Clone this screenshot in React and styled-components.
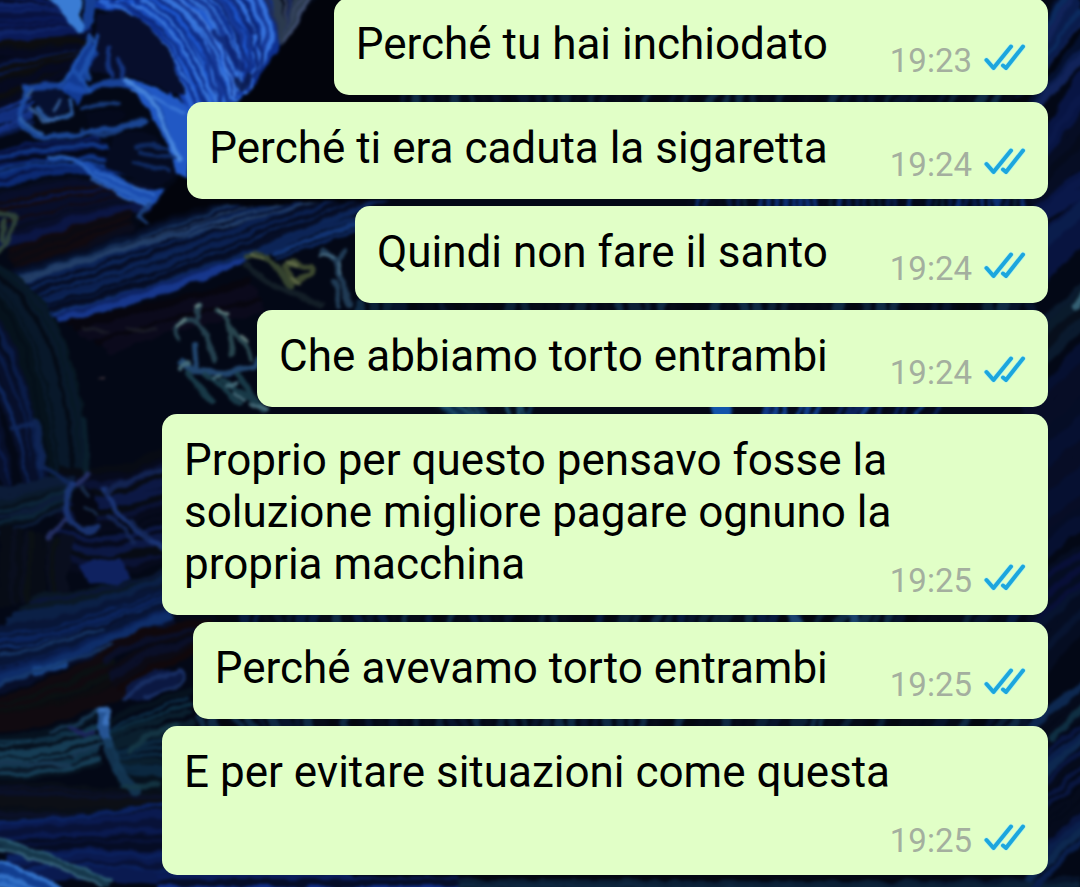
import React from "react";
import styled, { createGlobalStyle } from "styled-components";

const GlobalStyle = createGlobalStyle`
  *, *::before, *::after { box-sizing: border-box; }
  body {
    margin: 0;
    background: #030816;
    font-family: Roboto, "Noto Sans", sans-serif;
  }
`;

const Screen = styled.main`
  position: relative;
  height: 100vh;
  overflow: hidden;
  background: #030816;
`;

const Wallpaper = styled.svg`
  position: absolute;
  inset: 0;
  width: 100%;
  height: 100%;
`;

const MessageList = styled.ol`
  position: relative;
  display: flex;
  flex-direction: column;
  align-items: flex-end;
  justify-content: flex-end;
  gap: 7px;
  height: 100%;
  margin: 0;
  padding: 0 32px 12px;
  list-style: none;
`;

const Bubble = styled.li`
  display: flow-root;
  flex: none;
  max-width: calc(100% - 130px);
  padding: 20px 22px 16px;
  border-radius: 15px;
  background: #e1ffc7;
  color: #000;
  font-size: 44px;
  line-height: 52px;
`;

const Meta = styled.span`
  float: right;
  display: flex;
  align-items: flex-end;
  gap: 11px;
  height: 61px;
  margin-left: 62px;
  color: #a4af9f;
  font-size: 33px;
  line-height: 36px;
`;

const Ticks = styled.svg`
  display: block;
  width: 43px;
  height: 36px;
  fill: none;
  stroke-linecap: round;
  stroke-linejoin: round;
`;

const TICK_PATH = "M3.5 17 L10.5 25 L28 3.5 M20 22.5 L23 25 L40 3.5";

function ReadTicks() {
  return (
    <Ticks viewBox="0 0 43 36" role="img" aria-label="Letto">
      <path d={TICK_PATH} stroke="#b5f3e8" strokeWidth="5.4" />
      <path d={TICK_PATH} stroke="#1ca6dd" strokeWidth="4" />
    </Ticks>
  );
}

const MESSAGES = [
  { text: "Perché tu hai inchiodato", time: "19:23" },
  { text: "Perché ti era caduta la sigaretta", time: "19:24" },
  { text: "Quindi non fare il santo", time: "19:24" },
  { text: "Che abbiamo torto entrambi", time: "19:24" },
  {
    text: "Proprio per questo pensavo fosse la soluzione migliore pagare ognuno la propria macchina",
    time: "19:25",
  },
  { text: "Perché avevamo torto entrambi", time: "19:25" },
  { text: "E per evitare situazioni come questa", time: "19:25" },
];

const NAVY = ["#04102f", "#0a1c4c", "#040a1c", "#11235a", "#020612", "#0b2a5e"];
const BLUE = ["#1540ac", "#1d56cc", "#0e3090", "#2a64d2", "#163896", "#3673dc"];
const DIM = ["#07142c", "#0b2036", "#050b18", "#0f2a44", "#03070f"];
const TEAL = ["#0a2038", "#103349", "#06121f", "#163d55", "#0a1828"];

// Each bundle blends brush strokes between two cubic curves.
const BUNDLES = [
  // left edge, top
  { a: [-10, -6, 20, -6, 40, 0, 60, 4], b: [-10, 50, 30, 48, 60, 40, 90, 34], n: 16, w: 5, c: ["#0a1a58", "#081240", "#0f2468", "#050a24"] },
  { a: [-10, 48, 30, 44, 60, 40, 84, 42], b: [-10, 108, 20, 102, 50, 80, 70, 70], n: 14, w: 5, c: ["#0a1a4a", "#080c18", "#0c0d10", "#060a20"] },
  { a: [-10, 112, 10, 106, 20, 102, 30, 98], b: [-10, 140, 10, 132, 20, 130, 32, 124], n: 7, w: 4, c: ["#123080", "#0a1b4c", "#163488"] },
  { a: [-10, 152, 30, 140, 60, 142, 100, 140], b: [-10, 186, 30, 174, 80, 166, 130, 176], n: 14, w: 4, c: ["#0c2a74", "#07103a", "#113684", "#0a1c58", "#040818"] },
  { a: [-10, 194, 30, 184, 70, 174, 150, 186], b: [-10, 250, 50, 236, 90, 216, 150, 206], n: 16, w: 5, c: ["#070d20", "#0b1644", "#05060c", "#120b12", "#080e2a"] },
  { a: [10, 250, 50, 236, 80, 224, 130, 212], b: [20, 274, 60, 256, 100, 240, 130, 228], n: 6, w: 5, c: ["#0b0a12", "#0a0c1c", "#110a10"] },
  // bright sweep at the top
  { a: [88, -2, 150, -8, 170, 60, 186, 178], b: [268, -20, 286, 20, 286, 50, 234, 100], n: 2, w: 2, c: ["#1747b6"] },
  { a: [90, 4, 148, 6, 168, 70, 196, 126], b: [262, -10, 274, 20, 288, 40, 254, 84], n: 34, w: 7, c: BLUE },
  { a: [110, 6, 170, 20, 184, 90, 206, 114], b: [240, -10, 250, 20, 272, 50, 258, 74], n: 14, w: 2, c: ["#4a86e6", "#0d2c84", "#3a78dc", "#0c2470"] },
  { a: [264, -10, 272, 10, 278, 24, 282, 44], b: [316, -10, 312, 0, 300, 14, 284, 40], n: 9, w: 4, c: ["#35415e", "#1d2c5c", "#2b3a4e", "#3c4a6a"] },
  // diagonals below the canvas edge
  { a: [10, 276, 90, 252, 180, 218, 262, 196], b: [54, 314, 150, 292, 250, 252, 390, 196], n: 24, w: 6, c: ["#071532", "#0b2050", "#050c22", "#0c2558", "#060e26"] },
  { a: [20, 276, 100, 250, 180, 226, 240, 200], b: [24, 280, 130, 244, 200, 232, 330, 196], n: 4, w: 2, c: ["#24406a", "#163058"] },
  { a: [54, 314, 120, 300, 180, 278, 244, 258], b: [64, 320, 130, 306, 190, 284, 240, 264], n: 4, w: 4, c: ["#17378c", "#0e2464", "#1e489c"] },
  { a: [268, 250, 300, 238, 330, 222, 400, 210], b: [280, 256, 310, 246, 350, 230, 400, 216], n: 3, w: 4, c: ["#123474", "#0c2456"] },
  { a: [70, 324, 120, 314, 180, 300, 250, 280], b: [110, 350, 150, 330, 200, 322, 260, 310], n: 8, w: 6, c: ["#060818", "#0b0a1c", "#07060f"] },
  // arcs at the left edge
  { a: [-10, 264, 40, 280, 84, 350, 84, 470], b: [-10, 300, 22, 330, 34, 420, 40, 480], n: 16, w: 6, c: ["#05121c", "#071822", "#040b16", "#08182a"] },
  { a: [-4, 320, 18, 350, 34, 420, 42, 480], b: [-10, 380, 8, 410, 18, 440, 24, 484], n: 8, w: 5, c: ["#0a1c48", "#0e265c", "#070f2a"] },
  { a: [-10, 400, 0, 420, 6, 450, 10, 480], b: [-10, 440, -4, 450, 0, 470, 4, 484], n: 4, w: 6, c: ["#0a1a48", "#070f2a"] },
  // lower left waves
  { a: [60, 470, 90, 480, 130, 470, 170, 450], b: [60, 560, 90, 580, 130, 570, 170, 560], n: 16, w: 7, c: ["#060a1c", "#0a1234", "#070b14", "#0c1844"] },
  { a: [-10, 490, 20, 484, 50, 480, 74, 478], b: [-10, 534, 20, 530, 40, 520, 66, 504], n: 10, w: 5, c: ["#0a1a2c", "#0c2438", "#07121e", "#0c1c38"] },
  { a: [4, 530, 2, 550, 4, 580, 0, 604], b: [70, 540, 64, 560, 62, 580, 66, 596], n: 12, w: 7, c: ["#070c16", "#090e1e", "#0a1014"] },
  { a: [36, 598, 80, 590, 120, 592, 170, 570], b: [-10, 634, 50, 632, 110, 610, 170, 584], n: 10, w: 5, c: ["#0a1826", "#0b2046", "#0a1638"] },
  { a: [-10, 626, 60, 632, 110, 606, 170, 588], b: [-10, 694, 50, 676, 90, 652, 170, 622], n: 20, w: 5, c: ["#0b2258", "#081638", "#0f2e6a", "#070f2a", "#0c2660"] },
  { a: [0, 700, 50, 684, 80, 668, 110, 650], b: [-10, 726, 40, 724, 80, 712, 120, 696], n: 9, w: 7, c: ["#0c0c10", "#0a1012", "#100a10"] },
  { a: [100, 652, 130, 632, 160, 624, 210, 622], b: [120, 690, 150, 664, 170, 662, 210, 646], n: 8, w: 6, c: ["#0b0a14", "#0a0f28", "#10080c"] },
  { a: [-10, 736, 30, 736, 60, 730, 96, 716], b: [-10, 776, 30, 780, 70, 774, 100, 764], n: 14, w: 4, c: TEAL },
  { a: [108, 726, 130, 708, 160, 704, 190, 690], b: [122, 784, 140, 796, 160, 790, 190, 800], n: 15, w: 5, c: ["#0a1f2e", "#0b2840", "#06121e", "#0c2c40"] },
  { a: [-10, 784, 40, 780, 90, 790, 170, 794], b: [-10, 822, 50, 820, 100, 828, 170, 812], n: 10, w: 6, c: ["#080e18", "#0a1028", "#0c0f16"] },
  { a: [-10, 824, 60, 824, 110, 810, 180, 806], b: [20, 884, 90, 864, 130, 890, 380, 890], n: 20, w: 6, c: ["#0a1a50", "#081238", "#0b2260", "#050c24"] },
  { a: [-10, 838, 30, 846, 70, 866, 110, 880], b: [-10, 850, 20, 850, 60, 868, 100, 886], n: 5, w: 3, c: ["#2b5a72", "#16384c", "#356078"] },
  { a: [-10, 862, 10, 866, 40, 876, 60, 892], b: [-10, 884, 10, 884, 20, 888, 34, 898], n: 6, w: 5, c: ["#1d58b4", "#3270c6", "#123e90"] },
  { a: [160, 878, 240, 874, 320, 882, 470, 878], b: [160, 892, 240, 888, 320, 894, 470, 890], n: 6, w: 4, c: ["#0a1c5a", "#12308a", "#060e28"] },
  { a: [460, 878, 640, 874, 840, 884, 1080, 876], b: [460, 890, 640, 890, 840, 894, 1080, 890], n: 6, w: 4, c: DIM },
  // right edge
  { a: [1020, 60, 1046, 30, 1060, 0, 1070, -20], b: [1020, 124, 1050, 96, 1070, 70, 1090, 50], n: 12, w: 7, c: NAVY },
  { a: [1020, 178, 1046, 140, 1070, 90, 1090, 66], b: [1020, 230, 1050, 214, 1070, 200, 1090, 190], n: 12, w: 8, c: ["#081544", "#050b1c", "#0a184a", "#060d24"] },
  { a: [1020, 250, 1050, 230, 1070, 212, 1090, 194], b: [1030, 290, 1050, 274, 1070, 250, 1090, 236], n: 7, w: 7, c: ["#0a1d4c", "#081440"] },
  { a: [1030, 330, 1050, 318, 1070, 300, 1090, 284], b: [1030, 372, 1050, 360, 1070, 336, 1090, 320], n: 7, w: 6, c: ["#0a1b2c", "#0a1a2e", "#070f1c"] },
  { a: [1030, 400, 1050, 396, 1070, 370, 1090, 350], b: [1030, 560, 1050, 550, 1070, 530, 1090, 520], n: 14, w: 14, c: ["#061031", "#070d26", "#050d26"] },
  { a: [1030, 580, 1050, 566, 1070, 556, 1090, 546], b: [1030, 690, 1050, 660, 1070, 640, 1090, 620], n: 12, w: 9, c: ["#071430", "#050d22", "#080f38"] },
  { a: [1030, 730, 1050, 710, 1070, 694, 1090, 684], b: [1030, 890, 1050, 870, 1070, 850, 1090, 836], n: 18, w: 6, c: ["#0a1f4c", "#050b1c", "#0d2850", "#091640"] },
  // vertical ripples seen between the bubbles
  { a: [360, 90, 362, 96, 362, 98, 364, 106], b: [1030, 88, 1026, 94, 1020, 98, 1016, 108], n: 50, w: 7, c: DIM },
  { a: [690, 196, 690, 200, 690, 204, 690, 210], b: [1030, 194, 1030, 200, 1030, 204, 1030, 210], n: 44, w: 5, c: ["#081c48", "#04091a", "#0d2f72", "#0a2038"] },
  { a: [360, 302, 360, 304, 360, 308, 360, 312], b: [1030, 302, 1030, 304, 1030, 308, 1030, 312], n: 50, w: 9, c: DIM },
  { a: [430, 404, 436, 408, 444, 412, 450, 418], b: [530, 402, 530, 408, 530, 412, 530, 418], n: 16, w: 4, c: ["#0c2c4c", "#1d4c6a", "#050c18"] },
  { a: [770, 404, 770, 408, 768, 412, 766, 418], b: [940, 402, 936, 408, 934, 412, 930, 418], n: 22, w: 5, c: ["#0a225c", "#12408e", "#04091c"] },
  { a: [220, 612, 220, 616, 220, 620, 224, 626], b: [1020, 612, 1016, 616, 1012, 620, 1010, 626], n: 70, w: 8, c: [...DIM, "#071a3e"] },
  { a: [200, 716, 200, 720, 200, 724, 206, 730], b: [1030, 716, 1026, 720, 1024, 724, 1020, 730], n: 70, w: 8, c: DIM },
];

const SHAPES = [
  // black wedge beside the bright sweep
  ["M320 -4 L284 44 L240 104 L190 164 L150 212 L138 228 L196 206 L400 200 L400 -4 Z", "#02040c"],
  // pale curl
  ["M46 -4 L64 12 L80 34 L84 30 L80 16 L82 -4 Z", "#3a7cd4"],
  ["M84 -4 L82 34 L94 22 L98 -4 Z", "#163f94"],
  // dark hollows
  ["M98 14 Q130 6 146 24 Q172 46 184 96 Q156 84 134 78 L112 78 L88 66 Z", "#070e2c"],
  ["M88 112 Q112 104 124 116 Q112 130 96 130 Q84 124 88 112 Z", "#04091c"],
  ["M112 138 Q140 120 158 140 L180 172 L162 188 Q134 182 106 166 Z", "#050b20"],
  ["M30 92 Q50 84 64 92 L70 108 Q54 124 38 112 Z", "#061030"],
  // bright fold
  ["M120 78 Q152 82 178 98 L194 118 L188 180 L178 172 Q166 130 134 92 Z", "#2158c4"],
  ["M76 160 Q110 168 136 188 L166 190 L150 208 Q122 200 92 178 Z", "#1c4eb0"],
  ["M70 66 L88 40 L98 54 L88 76 L80 104 L64 92 Z", "#123a92"],
  // hollow in the lower left
  ["M70 494 Q80 480 96 494 Q102 526 86 530 Q70 520 70 494 Z", "#040714"],
  ["M124 690 Q146 664 184 670 Q190 680 160 694 Q140 704 124 700 Z", "#0b1842"],
  ["M78 566 Q100 556 120 558 L130 580 Q110 588 88 582 Z", "#0f2260"],
];

const ACCENTS = [
  // curl outlines, top left
  ["M62 84 Q72 74 76 62 Q84 48 88 36 L94 44 Q90 62 80 80", "#2257b4", 4],
  ["M24 88 Q60 82 84 92 Q112 78 130 84 Q158 96 168 136", "#1c4cae", 7],
  ["M126 80 Q150 94 162 120 Q170 140 180 160", "#4f8ee0", 4],
  ["M134 92 Q156 96 184 114", "#3d7ad8", 3],
  ["M26 88 Q20 112 20 124 Q24 134 44 138 Q96 134 146 120", "#1f50a8", 5],
  ["M20 118 Q26 130 40 134 M38 110 Q46 124 66 116 Q78 112 70 100", "#2f63ae", 4],
  ["M26 96 L32 88 M30 108 L42 120 L58 118 M60 100 L54 110", "#3a64a0", 3],
  ["M82 130 Q100 142 126 126 M84 108 Q98 100 118 104", "#1b4288", 4],
  ["M50 156 Q76 156 92 174 Q112 190 150 202", "#2c64c0", 4],
  ["M96 170 Q116 182 154 194 M90 178 Q112 196 148 206", "#3a76d0", 2],
  ["M96 36 Q88 60 90 78 M74 72 Q84 76 88 92", "#1f52ae", 5],
  ["M108 48 Q104 66 112 76 M118 60 L122 76", "#16398c", 5],
  ["M140 152 L176 158 M136 148 Q150 142 168 150 M132 162 L170 172", "#12306e", 4],
  ["M214 32 L236 56 M226 40 L242 70 M248 24 L252 32", "#0c2270", 6],
  ["M236 80 L242 88 L250 76", "#091848", 6],
  ["M150 204 L138 216 L148 222", "#1f4482", 4],
  // green twigs at the left edge
  ["M-2 214 L16 218 L8 240 L-2 252 M4 222 L2 240", "#344a3c", 5],
  // olive branch
  ["M246 258 Q258 250 270 262 L284 278 L292 288 M254 252 L268 256", "#3e4e34", 6],
  ["M284 268 Q290 258 302 266 Q318 264 308 276 L294 282 Z", "#465434", 6],
  ["M250 254 L262 258 M286 262 L296 264 M292 278 L298 284", "#64704a", 3],
  ["M246 266 L270 284 L320 304", "#16222a", 6],
  ["M322 252 L338 262 L344 290 L350 306 M338 262 L344 250 M334 280 L338 306", "#264460", 6],
  ["M320 256 L334 258 M340 262 L342 274", "#4a6e86", 3],
  // frosted branch
  ["M178 338 Q174 324 186 320 Q200 318 206 340 L214 360 M196 312 L200 306 L198 318", "#2a4a58", 5],
  ["M218 310 Q230 316 228 326 L246 346 L250 358 M228 326 L234 354", "#2f5058", 5],
  ["M178 326 L184 320 M220 310 L230 314 M196 308 L200 306 M242 336 L248 342", "#6d8a88", 3],
  ["M182 362 L196 370 L226 372 L252 366 L258 360 M196 370 L194 344", "#27507c", 6],
  ["M190 372 Q194 386 212 402 M206 374 L240 404 M222 380 L256 402 M238 374 L262 410", "#1c4250", 6],
  ["M214 378 L220 374 M234 392 L244 400 M226 386 L236 382 M182 368 L188 362 M250 404 L266 410", "#4a7280", 4],
  // small highlights
  ["M84 328 L110 332 M126 328 L156 330", "#1c1e28", 3],
  ["M98 378 L106 377", "#4a3c44", 2],
  // knot, lower left
  ["M36 420 L42 468 L72 482 M12 428 L32 424", "#10285c", 5],
  ["M84 420 L88 474", "#0a2230", 5],
  ["M72 482 Q60 500 70 520 Q84 536 98 528 M104 488 Q114 520 168 550", "#1d3a7c", 5],
  ["M106 492 Q118 480 164 470 M130 520 L150 538 M110 516 L134 544", "#152858", 5],
  ["M50 536 L66 520 M76 484 L90 476", "#28346c", 5],
  ["M80 488 L90 496 M86 508 L96 514", "#1b3050", 4],
  ["M36 672 L64 664", "#1c4f9a", 8],
  ["M0 656 Q60 642 104 628 M0 684 Q60 664 110 646", "#183a6c", 3],
  ["M124 700 L144 682 L180 670 Q190 676 180 686 L146 696", "#1b3268", 4],
  ["M102 716 Q106 736 108 744", "#2c60a8", 10],
  ["M108 744 Q114 770 134 790", "#153a58", 12],
  ["M96 712 L110 711 L106 722", "#3f78c4", 5],
  ["M50 732 Q78 726 96 712 M0 764 L70 764 M72 756 L98 748", "#1a3c58", 4],
  ["M130 752 Q144 734 176 726 M122 786 L160 784", "#163a48", 5],
  ["M70 728 L84 734 L94 730", "#1e2660", 5],
  // highlights between bubbles and at the right edge
  ["M722 396 L722 426", "#1460c4", 19],
  ["M764 402 L764 420", "#123f96", 6],
  ["M790 610 L800 626 M850 610 L856 626", "#1d4a78", 9],
  ["M1074 306 L1086 294", "#3c6c80", 7],
  ["M1052 738 L1086 706", "#12364a", 6],
];

// Repeatable pseudo-random values keep the brush work stable between renders.
function noise(seed) {
  const value = Math.sin(seed * 12.9898) * 43758.5453;
  return value - Math.floor(value);
}

function bundlePaths(bundle, index) {
  return Array.from({ length: bundle.n }, (_, i) => {
    const t = bundle.n === 1 ? 0 : i / (bundle.n - 1);
    const p = bundle.a.map((start, k) => {
      const wobble = (noise(index * 97 + i * 13 + k) - 0.5) * 4;
      return (start + (bundle.b[k] - start) * t + wobble).toFixed(1);
    });
    return (
      <path
        key={`${index}-${i}`}
        d={`M${p[0]} ${p[1]} C${p[2]} ${p[3]} ${p[4]} ${p[5]} ${p[6]} ${p[7]}`}
        stroke={bundle.c[Math.floor(noise(index * 31 + i * 7) * bundle.c.length)]}
        strokeWidth={bundle.w * (0.7 + noise(i + index) * 0.7)}
      />
    );
  });
}

function PaintedWallpaper() {
  return (
    <Wallpaper viewBox="0 0 1080 887" preserveAspectRatio="xMidYMid slice" aria-hidden="true">
      <defs>
        <filter id="paint" x="0" y="0" width="100%" height="100%" colorInterpolationFilters="sRGB">
          <feTurbulence type="fractalNoise" baseFrequency="0.05" numOctaves="2" seed="4" result="grain" />
          <feDisplacementMap in="SourceGraphic" in2="grain" scale="9" xChannelSelector="R" yChannelSelector="G" />
          <feGaussianBlur stdDeviation="1.4" />
        </filter>
      </defs>
      <g filter="url(#paint)">
        <rect x="-20" y="-20" width="1120" height="927" fill="#030816" />
        <g fill="none" strokeLinecap="round">
          {BUNDLES.map(bundlePaths)}
        </g>
        {SHAPES.map(([d, fill]) => (
          <path key={d} d={d} fill={fill} />
        ))}
        <g fill="none" strokeLinecap="round" strokeLinejoin="round">
          {ACCENTS.map(([d, stroke, width]) => (
            <path key={d} d={d} stroke={stroke} strokeWidth={width} opacity="0.85" />
          ))}
        </g>
      </g>
    </Wallpaper>
  );
}

function Message({ text, time }) {
  return (
    <Bubble>
      {text}
      <Meta>
        <time dateTime={time}>{time}</time>
        <ReadTicks />
      </Meta>
    </Bubble>
  );
}

export default function App() {
  return (
    <>
      <GlobalStyle />
      <Screen>
        <PaintedWallpaper />
        <MessageList>
          {MESSAGES.map((message) => (
            <Message key={message.text} {...message} />
          ))}
        </MessageList>
      </Screen>
    </>
  );
}
